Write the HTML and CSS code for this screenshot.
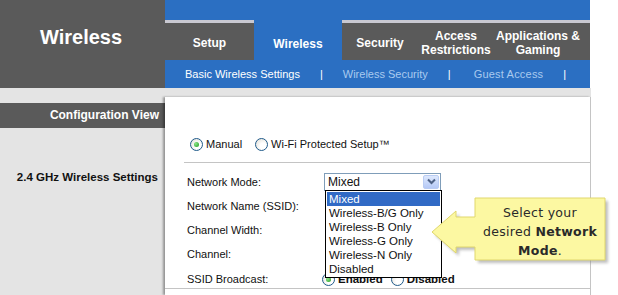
FILE: index.html
```html
<!DOCTYPE html>
<html lang="en">
<head>
  <meta charset="UTF-8" />
  <title>Wireless - Basic Wireless Settings</title>
  <link rel="stylesheet" href="styles.css">
</head>
<body>
  <div class="page">
    <header class="top">
      <div class="brand">Wireless</div>
      <nav class="nav">
        <div class="tabs">
          <div class="tab tab-setup">Setup</div>
          <div class="tab tab-wireless active">Wireless</div>
          <div class="tab tab-security">Security</div>
          <div class="tab tab-access">Access<br>Restrictions</div>
          <div class="tab tab-apps">Applications &amp;<br>Gaming</div>
          <div class="tab tab-fill"></div>
        </div>
        <div class="subnav">
          <span class="sub current">Basic Wireless Settings</span>
          <span class="sep">|</span>
          <span class="sub">Wireless Security</span>
          <span class="sep">|</span>
          <span class="sub guest">Guest Access</span>
          <span class="sep">|</span>
        </div>
      </nav>
    </header>

    <div class="main">
      <aside class="side">
        <div class="side-title">Configuration View</div>
        <div class="side-label">2.4 GHz Wireless Settings</div>
      </aside>

      <section class="panel">
        <div class="mode-row">
          <span class="radio checked"></span><span class="radio-text">Manual</span>
          <span class="radio"></span><span class="radio-text">Wi-Fi Protected Setup™</span>
        </div>
        <div class="rule"></div>

        <div class="rows">
          <div class="row">
            <span class="label">Network Mode:</span>
            <div class="select">
              <span class="select-value">Mixed</span>
              <span class="select-btn">
                <svg width="9" height="7" viewBox="0 0 9 7"><path d="M1 1.5 L4.5 5 L8 1.5" fill="none" stroke="#4d6185" stroke-width="2"/></svg>
              </span>
              <ul class="options">
                <li class="selected">Mixed</li>
                <li>Wireless-B/G Only</li>
                <li>Wireless-B Only</li>
                <li>Wireless-G Only</li>
                <li>Wireless-N Only</li>
                <li>Disabled</li>
              </ul>
            </div>
          </div>
          <div class="row"><span class="label">Network Name (SSID):</span></div>
          <div class="row"><span class="label">Channel Width:</span></div>
          <div class="row"><span class="label">Channel:</span></div>
          <div class="row last">
            <span class="label">SSID Broadcast:</span>
            <span class="radio checked"></span><span class="radio-text bold">Enabled</span>
            <span class="radio"></span><span class="radio-text bold">Disabled</span>
          </div>
        </div>

        <div class="callout">
          <svg class="callout-shape" width="190" height="76" viewBox="0 0 190 76">
            <defs>
              <filter id="soft" x="-10%" y="-10%" width="130%" height="140%">
                <feGaussianBlur stdDeviation="1.6"/>
              </filter>
            </defs>
            <polygon points="50,6 180,6 180,68 50,68 50,55 31,55 31,61 7,40 31,19 31,25 50,25" fill="#8a8a8a" opacity="0.55" filter="url(#soft)"/>
            <polygon points="47,3 177,3 177,65 47,65 47,52 28,52 28,58 4,37 28,16 28,22 47,22" fill="#fcf8a2" stroke="#e0d76c" stroke-width="1"/>
          </svg>
          <div class="callout-text">Select your<br>desired <b>Network</b><br><b>Mode</b>.</div>
        </div>
      </section>
    </div>
  </div>
</body>
</html>
```

FILE: styles.css
```css
:root {
  --blue: #2b6fc2;
  --dark: #5a5a5a;
  --light: #e4e4e4;
  --line: #c4c4c4;
}

* {
  box-sizing: border-box;
  margin: 0;
  padding: 0;
}

body {
  background: #fff;
  font-family: "Liberation Sans", Arial, sans-serif;
  color: #111;
  width: 618px;
  height: 295px;
  overflow: hidden;
}

.page {
  width: 591px;
}

/* header */
.top {
  display: flex;
  height: 88px;
}

.brand {
  width: 165px;
  background: var(--dark);
  color: #fff;
  font-weight: bold;
  font-size: 20px;
  line-height: 22px;
  padding: 26px 0 0 40px;
}

.nav {
  width: 425px;
  background: var(--blue);
  padding-top: 20px;
}

.tabs {
  display: flex;
  height: 40px;
}

.tab {
  background: var(--dark);
  border-top: 3px solid #c9c9d2;
  color: #fff;
  font-weight: bold;
  font-size: 12px;
  line-height: 14px;
  display: flex;
  align-items: center;
  justify-content: center;
  text-align: center;
  padding-top: 2px;
}

.tab.active {
  background: var(--blue);
  border-top-color: var(--blue);
  padding-top: 5px;
}

.tab-setup { width: 89px; }
.tab-wireless { width: 88px; }
.tab-security { width: 76px; }
.tab-access { width: 76px; }
.tab-apps { width: 88px; }
.tab-fill { flex: 1; }

.subnav {
  height: 28px;
  display: flex;
  align-items: center;
  gap: 20px;
  padding-left: 20px;
  font-size: 11px;
}

.sub {
  color: #a9caef;
}

.sub.current {
  color: #fff;
}

.sub.guest {
  margin-left: 3px;
  letter-spacing: 0.2px;
}

.sep {
  color: #fff;
}

/* body area */
.main {
  display: flex;
  background: var(--light);
  height: 207px;
}

.side {
  width: 165px;
  padding-top: 15px;
}

.side-title {
  background: var(--dark);
  color: #fff;
  font-weight: bold;
  font-size: 12px;
  height: 25px;
  line-height: 25px;
  text-align: right;
  padding-right: 6px;
}

.side-label {
  margin-top: 42px;
  font-weight: bold;
  font-size: 11.5px;
  line-height: 14px;
  text-align: right;
  padding-right: 7px;
  color: #111;
}

.panel {
  position: relative;
  width: 426px;
  margin-top: 9px;
  background: #fff;
  border-right: 1px solid var(--line);
  box-shadow: -2px 0 2px rgba(0, 0, 0, 0.35);
  padding-top: 39px;
}

.mode-row {
  display: flex;
  align-items: center;
  height: 16px;
  padding-left: 25px;
  font-size: 11px;
}

.radio {
  width: 13px;
  height: 13px;
  border-radius: 50%;
  border: 1px solid #1f5a8a;
  background: radial-gradient(circle at 65% 65%, #fff 30%, #dedbd2 100%);
  display: inline-flex;
  align-items: center;
  justify-content: center;
  flex: none;
}

.radio.checked::after {
  content: "";
  width: 5px;
  height: 5px;
  border-radius: 50%;
  background: radial-gradient(circle at 35% 35%, #8ee68a, #1d9a1d);
}

.radio-text {
  margin-left: 3px;
  margin-right: 13px;
}

.rule {
  height: 1px;
  background: var(--line);
  margin: 10px 0 0 19px;
}

.rows {
  margin-top: 7px;
  padding-left: 22px;
  border-bottom: 1px solid var(--line);
}

.row {
  display: flex;
  align-items: center;
  height: 24px;
  font-size: 11px;
}

.row.last {
  height: 22px;
  padding-top: 4px;
}

.label {
  width: 137px;
  flex: none;
}

.row.last .label {
  width: 135px;
}

.bold {
  font-weight: bold;
  font-size: 11.5px;
}

.row.last .radio-text {
  margin-right: 8px;
}

/* select with open list */
.select {
  position: relative;
  width: 117px;
  height: 18px;
  margin-top: -1px;
  border: 1px solid #7f9db9;
  display: flex;
  align-items: center;
  justify-content: space-between;
  padding: 0 1px 0 3px;
  font-size: 12px;
  z-index: 2;
}

.select-btn {
  width: 16px;
  height: 14px;
  border: 1px solid #b9ccf3;
  border-radius: 2px;
  background: linear-gradient(#dde8fd, #b5c9f7);
  display: flex;
  align-items: center;
  justify-content: center;
}

.options {
  position: absolute;
  top: 16px;
  left: 0;
  width: 117px;
  list-style: none;
  background: #fff;
  border: 1px solid #000;
  padding: 1px;
  font-size: 11.5px;
}

.options li {
  height: 14px;
  line-height: 14px;
  padding-left: 2px;
}

.options li.selected {
  background: #316ac5;
  color: #fff;
}

/* callout */
.callout {
  position: absolute;
  left: 263px;
  top: 98px;
  width: 190px;
  height: 76px;
  z-index: 3;
}

.callout-shape {
  position: absolute;
  left: 0;
  top: 0;
}

.callout-text {
  position: absolute;
  left: 47px;
  top: 8px;
  width: 130px;
  text-align: center;
  font-family: "DejaVu Sans", Verdana, sans-serif;
  font-size: 12.5px;
  line-height: 19px;
  letter-spacing: 0.3px;
  color: #2a2a2a;
}
```
